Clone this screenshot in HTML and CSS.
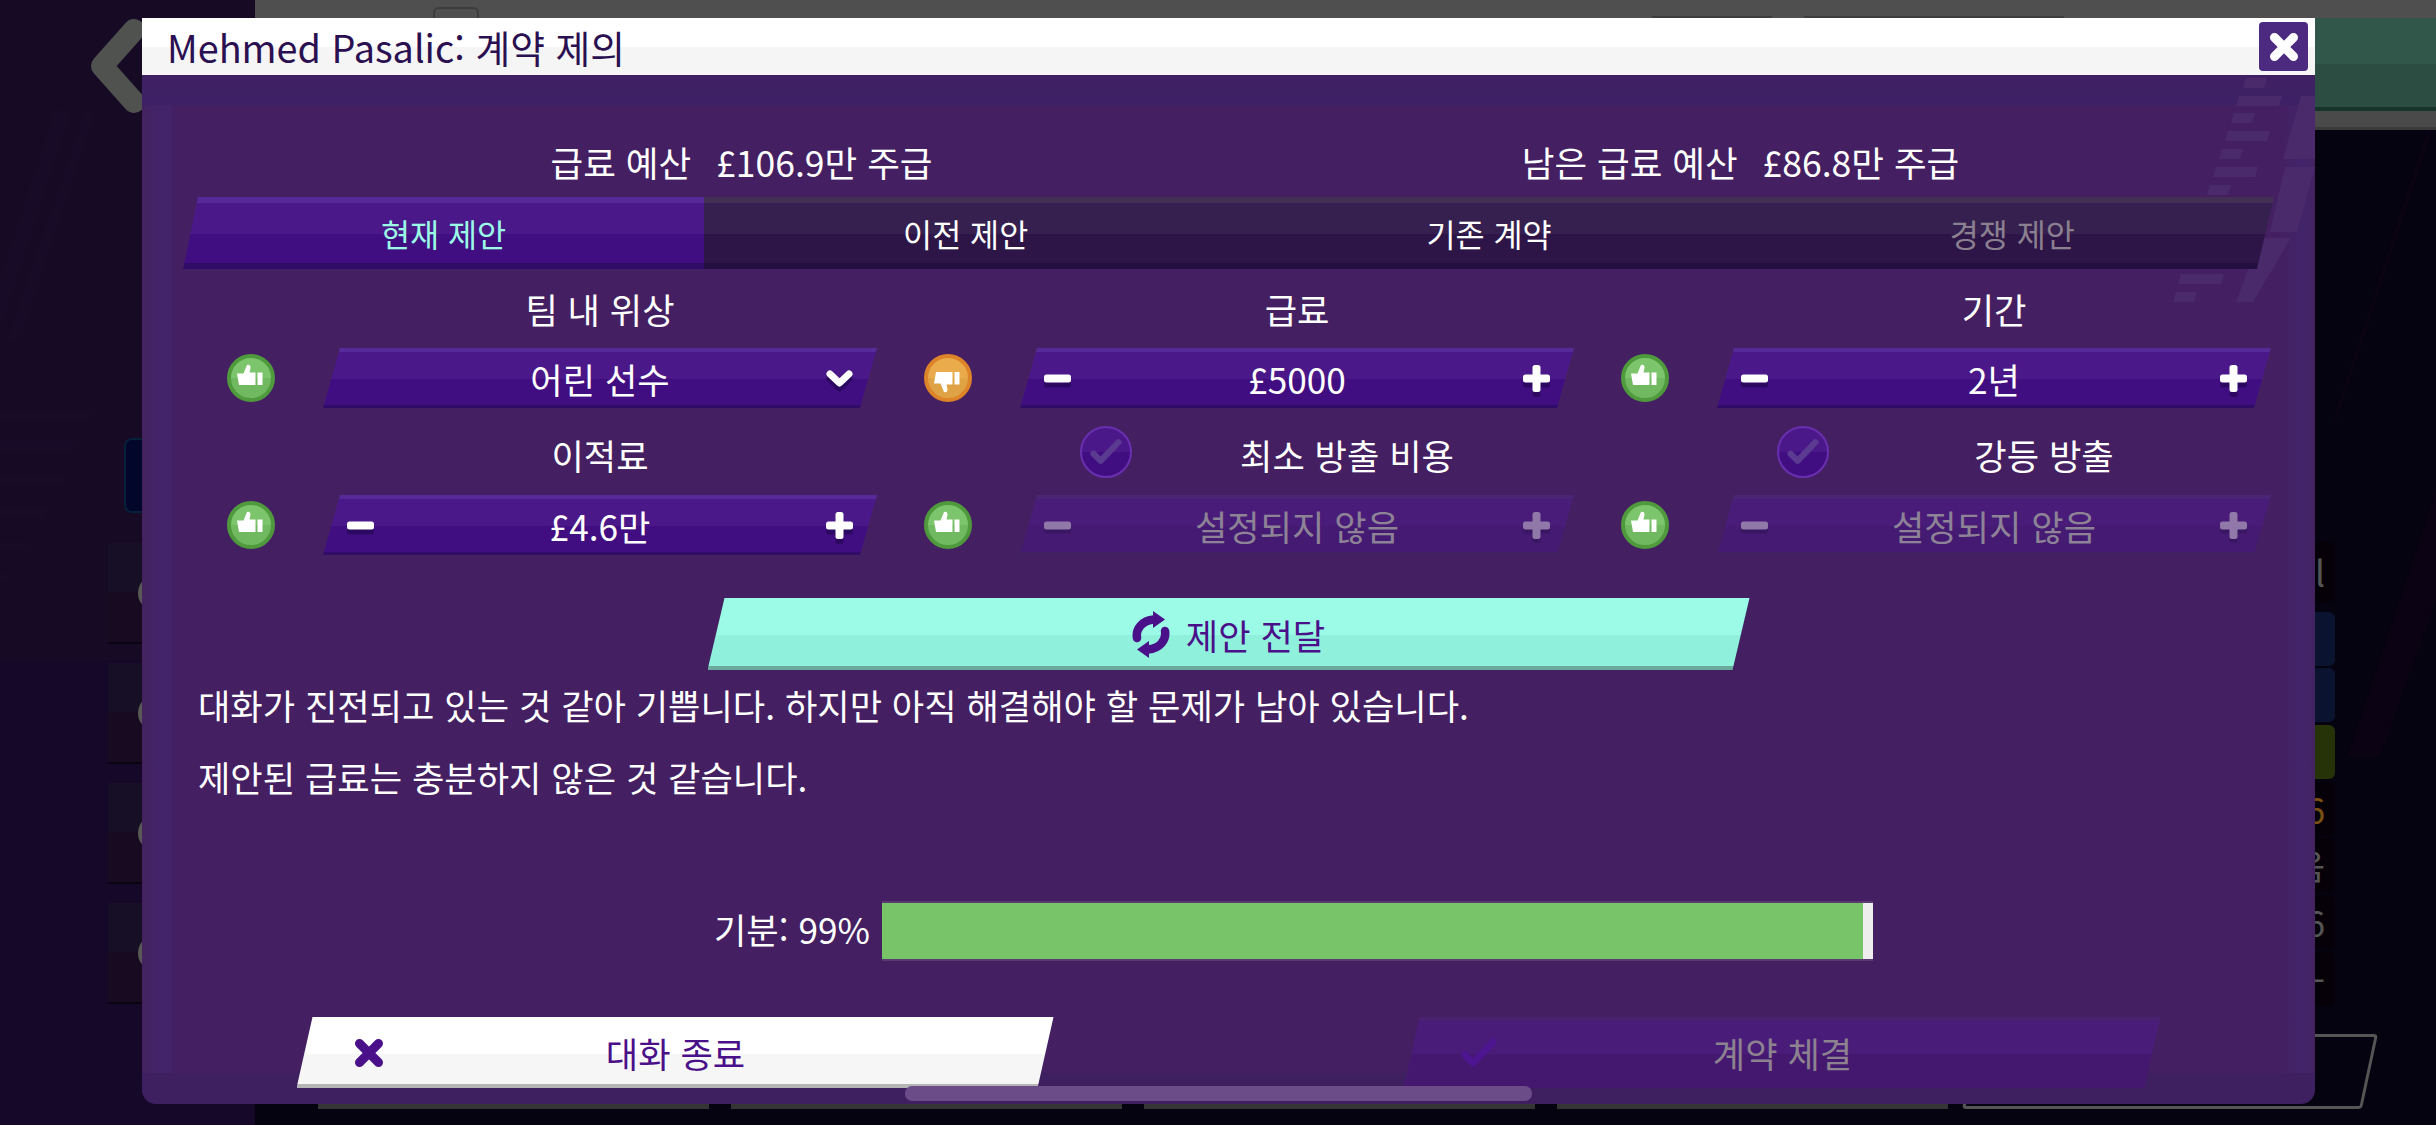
FILE: index.html
```html
<!DOCTYPE html>
<html lang="ko">
<head>
    <meta charset="UTF-8">
    <meta name="viewport" content="width=device-width, initial-scale=1.0">
    <title>Mehmed Pasalic: 계약 제의</title>
    <link rel="stylesheet" href="styles.css">
</head>
<body>
    <svg class="icon-defs" width="0" height="0">
        <defs>
            <linearGradient id="good-fill" x1="0" y1="0" x2="0" y2="1">
                <stop offset="0.5" stop-color="#7cc56c"/>
                <stop offset="0.5" stop-color="#71b961"/>
            </linearGradient>
            <linearGradient id="bad-fill" x1="0" y1="0" x2="0" y2="1">
                <stop offset="0.5" stop-color="#e9ab4b"/>
                <stop offset="0.5" stop-color="#dfa244"/>
            </linearGradient>
            <linearGradient id="toggle-fill" x1="0" y1="0" x2="0" y2="1">
                <stop offset="0.5" stop-color="#4b1889"/>
                <stop offset="0.5" stop-color="#410e82"/>
            </linearGradient>
            <symbol id="thumb-up" viewBox="0 0 48 48">
                <path d="M10 19.5 L16.5 19.5 L20 11 Q23.5 10 23.5 14 L22.5 18.5 L28.5 18.5 L28.5 31 L12 31 Z" fill="#fff"/>
                <rect x="30.5" y="18.5" width="5" height="12.5" fill="#fff"/>
            </symbol>
            <symbol id="minus" viewBox="0 0 27 27">
                <rect x="0" y="9.5" width="27" height="8" rx="2.5" fill="currentColor"/>
            </symbol>
            <symbol id="plus" viewBox="0 0 27 27">
                <rect x="0" y="9.5" width="27" height="8" rx="2.5" fill="currentColor"/>
                <rect x="9.5" y="0" width="8" height="27" rx="2.5" fill="currentColor"/>
            </symbol>
            <symbol id="cross" viewBox="0 0 30 30">
                <path d="M5.5 5.5 L24.5 24.5 M24.5 5.5 L5.5 24.5" stroke="currentColor" stroke-width="9" stroke-linecap="round" fill="none"/>
            </symbol>
            <symbol id="tick" viewBox="0 0 36 30">
                <path d="M4 17 L12 25 L32 4" stroke="currentColor" stroke-width="7" stroke-linecap="round" stroke-linejoin="round" fill="none"/>
            </symbol>
        </defs>
    </svg>

    <!-- 뒤에 있는 화면 -->
    <div class="backdrop">
        <aside class="sidebar">
            <svg class="back-arrow" width="60" height="96" viewBox="0 0 60 96">
                <path d="M46 12 L14 48 L46 84" stroke="#50524f" stroke-width="22" stroke-linecap="round" stroke-linejoin="round" fill="none"/>
            </svg>
            <div class="side-badge"></div>
            <div class="side-row"></div>
            <div class="side-row"></div>
            <div class="side-row"></div>
            <div class="side-row"></div>
        </aside>
        <main class="screen">
            <div class="screen-top">
                <span class="top-tab"></span>
                <span class="top-mark first"></span>
                <span class="top-mark second"></span>
            </div>
            <div class="screen-hero"></div>
            <div class="screen-strip"></div>
            <div class="rail">
                <div class="rail-cell tall">l</div>
                <div class="rail-cell blue"></div>
                <div class="rail-cell blue"></div>
                <div class="rail-cell olive"></div>
                <div class="rail-cell orange">6</div>
                <div class="rail-cell">음</div>
                <div class="rail-cell">6</div>
                <div class="rail-cell">-</div>
            </div>
            <div class="screen-foot">
                <span class="foot-btn"></span>
                <span class="foot-btn"></span>
                <span class="foot-btn"></span>
                <span class="foot-btn"></span>
                <span class="foot-btn outline"></span>
            </div>
        </main>
        <svg class="backdrop-deco" width="2436" height="1125" viewBox="0 0 2436 1125">
            <polygon points="0,410 96,410 92,420 0,420"/>
            <polygon points="0,441 80,441 76,452 0,452"/>
            <polygon points="0,475 65,475 61,485 0,485"/>
            <polygon points="0,508 48,508 44,518 0,518"/>
            <polygon points="0,542 32,542 28,550 0,550"/>
            <polygon points="0,574 16,574 12,580 0,580"/>
            <polygon points="55,110 72,110 0,330 0,280"/>
            <polygon points="85,110 96,110 20,340 8,340"/>
            <polygon class="red" points="2348,756 2380,756 2436,600 2436,492"/>
            <polygon class="red" points="2333,420 2337,420 2432,130 2428,130"/>
        </svg>
    </div>

    <section class="modal">
        <svg class="modal-deco" width="2173" height="1086" viewBox="142 18 2173 1086">
            <polygon points="2246,78 2267,78 2264,88 2243,88"/>
            <polygon points="2239,96 2282,96 2279,106 2236,106"/>
            <polygon points="2234,113 2255,113 2252,123 2231,123"/>
            <polygon points="2228,131 2270,131 2267,141 2225,141"/>
            <polygon points="2222,149 2243,149 2240,159 2219,159"/>
            <polygon points="2216,167 2258,167 2255,177 2213,177"/>
            <polygon points="2210,185 2231,185 2228,195 2207,195"/>
            <polygon points="2181,274 2224,274 2221,284 2178,284"/>
            <polygon points="2176,292 2197,292 2194,302 2173,302"/>
            <polygon points="2301,96 2315,96 2315,159 2283,159"/>
            <polygon points="2285,167 2315,167 2297,232 2270,232"/>
            <polygon points="2260,238 2291,238 2253,302 2236,302"/>
        </svg>

        <header class="modal-header">
            <h1>Mehmed Pasalic: 계약 제의</h1>
            <button class="close-btn"><svg width="30" height="30"><use href="#cross"/></svg></button>
        </header>

        <div class="budget">
            <div class="budget-item"><span>급료 예산</span><span>£106.9만 주급</span></div>
            <div class="budget-item"><span>남은 급료 예산</span><span>£86.8만 주급</span></div>
        </div>

        <nav class="tabs">
            <div class="tab active">현재 제안</div>
            <div class="tab">이전 제안</div>
            <div class="tab">기존 계약</div>
            <div class="tab muted">경쟁 제안</div>
        </nav>

        <div class="terms">
            <div class="term">
                <div class="term-label">팀 내 위상</div>
                <div class="term-row">
                    <svg class="thumb good" width="48" height="48" viewBox="0 0 48 48"><circle cx="24" cy="24" r="22"/><use href="#thumb-up"/></svg>
                    <div class="field">
                        <span></span>
                        <span class="field-value">어린 선수</span>
                        <svg class="step chevron" width="27" height="20" viewBox="0 0 27 20"><path d="M4 5 L13.5 14 L23 5" stroke="currentColor" stroke-width="7" stroke-linecap="round" stroke-linejoin="round" fill="none"/></svg>
                    </div>
                </div>
            </div>
            <div class="term">
                <div class="term-label">급료</div>
                <div class="term-row">
                    <svg class="thumb bad" width="48" height="48" viewBox="0 0 48 48"><circle cx="24" cy="24" r="22"/><use href="#thumb-up" transform="matrix(1 0 0 -1 0 49)"/></svg>
                    <div class="field">
                        <svg class="step" width="27" height="27"><use href="#minus"/></svg>
                        <span class="field-value">£5000</span>
                        <svg class="step" width="27" height="27"><use href="#plus"/></svg>
                    </div>
                </div>
            </div>
            <div class="term">
                <div class="term-label">기간</div>
                <div class="term-row">
                    <svg class="thumb good" width="48" height="48" viewBox="0 0 48 48"><circle cx="24" cy="24" r="22"/><use href="#thumb-up"/></svg>
                    <div class="field">
                        <svg class="step" width="27" height="27"><use href="#minus"/></svg>
                        <span class="field-value">2년</span>
                        <svg class="step" width="27" height="27"><use href="#plus"/></svg>
                    </div>
                </div>
            </div>
            <div class="term">
                <div class="term-label lower">이적료</div>
                <div class="term-row">
                    <svg class="thumb good" width="48" height="48" viewBox="0 0 48 48"><circle cx="24" cy="24" r="22"/><use href="#thumb-up"/></svg>
                    <div class="field">
                        <svg class="step" width="27" height="27"><use href="#minus"/></svg>
                        <span class="field-value">£4.6만</span>
                        <svg class="step" width="27" height="27"><use href="#plus"/></svg>
                    </div>
                </div>
            </div>
            <div class="term">
                <div class="term-label lower checkable">
                    <svg class="check-toggle" width="52" height="52" viewBox="0 0 52 52"><circle cx="26" cy="26" r="25"/><use href="#tick" x="10" y="11" width="32" height="30"/></svg>
                    <span>최소 방출 비용</span>
                </div>
                <div class="term-row">
                    <svg class="thumb good" width="48" height="48" viewBox="0 0 48 48"><circle cx="24" cy="24" r="22"/><use href="#thumb-up"/></svg>
                    <div class="field off">
                        <svg class="step" width="27" height="27"><use href="#minus"/></svg>
                        <span class="field-value">설정되지 않음</span>
                        <svg class="step" width="27" height="27"><use href="#plus"/></svg>
                    </div>
                </div>
            </div>
            <div class="term">
                <div class="term-label lower checkable">
                    <svg class="check-toggle" width="52" height="52" viewBox="0 0 52 52"><circle cx="26" cy="26" r="25"/><use href="#tick" x="10" y="11" width="32" height="30"/></svg>
                    <span>강등 방출</span>
                </div>
                <div class="term-row">
                    <svg class="thumb good" width="48" height="48" viewBox="0 0 48 48"><circle cx="24" cy="24" r="22"/><use href="#thumb-up"/></svg>
                    <div class="field off">
                        <svg class="step" width="27" height="27"><use href="#minus"/></svg>
                        <span class="field-value">설정되지 않음</span>
                        <svg class="step" width="27" height="27"><use href="#plus"/></svg>
                    </div>
                </div>
            </div>
        </div>

        <button class="send-btn">
            <svg width="38" height="47" viewBox="0 0 38 47">
                <g id="refresh-half">
                    <path d="M5 27 C3.5 18 10 9.5 22 8.5" stroke="#4a1089" stroke-width="8.5" stroke-linecap="round" fill="none"/>
                    <polygon points="21,0 33,8.5 21,17" fill="#4a1089"/>
                </g>
                <use href="#refresh-half" transform="rotate(180 19 23.5)"/>
            </svg>
            <span>제안 전달</span>
        </button>

        <div class="messages">
            <p>대화가 진전되고 있는 것 같아 기쁩니다. 하지만 아직 해결해야 할 문제가 남아 있습니다.</p>
            <p>제안된 급료는 충분하지 않은 것 같습니다.</p>
        </div>

        <div class="mood">
            <span class="mood-label">기분: 99%</span>
            <div class="mood-bar"><div class="mood-fill" style="width: 99%"></div></div>
        </div>

        <footer class="actions">
            <button class="action-btn end">
                <svg width="30" height="30"><use href="#cross"/></svg>
                <span>대화 종료</span>
            </button>
            <button class="action-btn sign">
                <svg width="36" height="30"><use href="#tick"/></svg>
                <span>계약 체결</span>
            </button>
        </footer>

        <div class="scroll-thumb"></div>
    </section>
</body>
</html>
```

FILE: styles.css
```css
:root {
    --panel: #442062;
    --field-top: #562a98;
    --field-hi: #4b1889;
    --field-lo: #410e82;
    --field-edge: #300b68;
    --mint: #9bfbe7;
    --ink: #4a1089;
}

* {
    margin: 0;
    padding: 0;
    box-sizing: border-box;
}

body {
    position: relative;
    width: 2436px;
    height: 1125px;
    overflow: hidden;
    background-color: #05030f;
    color: #fff;
    font-family: "Noto Sans CJK KR", "Noto Sans", sans-serif;
    font-size: 35.2px;
}

button {
    border: none;
    font: inherit;
}

.icon-defs {
    position: absolute;
}

/* 뒤 화면 */
.backdrop {
    display: flex;
    height: 100%;
}

.backdrop-deco {
    position: absolute;
    left: 0;
    top: 0;
    fill: rgba(40, 30, 70, 0.1);
}

.backdrop-deco .red {
    fill: rgba(60, 0, 60, 0.12);
}

.sidebar {
    display: flex;
    flex-direction: column;
    width: 255px;
    padding: 18px 0 0 108px;
    background: linear-gradient(#170a24 0, #170a24 660px, #160829 660px);
}

.back-arrow {
    margin-left: -20px;
}

.side-badge {
    width: 60px;
    height: 75px;
    margin: 324px 0 0 16px;
    border-radius: 8px;
    background-color: #01062a;
    border: 2px solid #07203a;
}

.side-row {
    flex: none;
    display: flex;
    align-items: center;
    height: 101px;
    margin-bottom: 19px;
    padding-left: 30px;
    background: linear-gradient(#160f26 50%, #180a20 50%);
    border-bottom: 2px solid #0a0412;
}

.side-row::after {
    content: "";
    width: 36px;
    height: 36px;
    border-radius: 50%;
    background-color: #5a5a55;
}

.side-badge + .side-row {
    margin-top: 30px;
}

.screen {
    flex: 1;
    display: flex;
    flex-direction: column;
}

.screen-top {
    display: flex;
    height: 18px;
    background-color: #4f4f4f;
    padding-left: 178px;
}

.top-tab {
    width: 46px;
    height: 12px;
    margin-top: 7px;
    border: 2px solid #3d3d3d;
    border-bottom: none;
    border-radius: 6px 6px 0 0;
}

.top-mark {
    height: 2px;
    margin-top: 16px;
    background-color: #3d3d3d;
}

.top-mark.first {
    width: 120px;
    margin-left: 1173px;
}

.top-mark.second {
    width: 260px;
    margin-left: 32px;
}

.screen-hero {
    height: 93px;
    background: linear-gradient(#30574a 46px, #2c4d41 46px, #2c4d41 89px, #17342a 89px);
}

.screen-strip {
    height: 19px;
    background: linear-gradient(#4a4a4a 16px, #3a3a3a 16px);
}

.rail {
    display: flex;
    flex-direction: column;
    gap: 2.7px;
    align-self: flex-end;
    width: 60px;
    margin: 412px 101px 0 0;
}

.rail-cell {
    height: 54px;
    padding-right: 10px;
    border-radius: 6px;
    background-color: #060109;
    color: #555;
    line-height: 54px;
    text-align: right;
}

.rail-cell.tall {
    height: 60px;
    margin-bottom: 7px;
    line-height: 60px;
}

.rail-cell.blue {
    background-color: #0a1330;
}

.rail-cell.olive {
    background-color: #263208;
}

.rail-cell.orange {
    color: #7a5010;
}

.screen-foot {
    display: flex;
    gap: 22px;
    align-items: flex-end;
    margin: 28px 0 0 63px;
}

.foot-btn {
    width: 391px;
    height: 75px;
    background-color: #353535;
}

.foot-btn.outline {
    width: 400px;
    background: transparent;
    border: 3px solid #555;
    border-radius: 4px;
    transform: skewX(-12deg);
}

/* 제의 창 */
.modal {
    position: absolute;
    left: 142px;
    top: 18px;
    width: 2173px;
    height: 1086px;
    overflow: hidden;
    border-radius: 0 0 14px 14px;
    background:
        linear-gradient(#402063, #3d2166 30px, transparent 30px) 0 57px / 100% 30px no-repeat,
        linear-gradient(#3e1f60, #3e1f60) 0 100% / 100% 31px no-repeat,
        linear-gradient(90deg, #44225f, #42246b 20px, #43236a 30px, transparent 30px) 0 0 / 30px 100% no-repeat,
        linear-gradient(90deg, transparent, #42246b 20px, #43235f 32px) 100% 0 / 32px 100% no-repeat,
        var(--panel);
}

.modal-deco {
    position: absolute;
    left: 0;
    top: 0;
    fill: #4a2a6a;
}

.modal-header {
    position: relative;
    display: flex;
    align-items: center;
    justify-content: space-between;
    height: 57px;
    padding: 0 7px 0 25px;
    background: linear-gradient(#fff 29px, #f5f5f5 29px);
}

.modal-header h1 {
    font-size: 37.8px;
    font-weight: 400;
    line-height: 57px;
    color: #2a1050;
}

.close-btn {
    display: flex;
    align-items: center;
    justify-content: center;
    width: 49px;
    height: 49px;
    border-radius: 4px;
    background-color: #4b2a80;
    color: #fff;
}

.budget {
    position: relative;
    display: flex;
    height: 65px;
    margin-top: 54px;
    margin-bottom: 3px;
    padding-left: 100px;
    font-size: 35.5px;
    line-height: 65px;
}

.budget-item {
    display: flex;
    justify-content: center;
    gap: 25px;
    width: 999px;
}

.tabs {
    position: relative;
    display: flex;
    width: 2091px;
    height: 72px;
    margin-left: 41px;
    clip-path: polygon(15px 0, 100% 0, calc(100% - 17px) 100%, 0 100%);
}

.tab {
    flex: 1;
    font-size: 31.6px;
    line-height: 72px;
    text-align: center;
    background: linear-gradient(#443054 6px, #35204f 6px, #35204f 37px, #2e1548 37px, #2e1548 66px, #241040 66px);
}

.tab.active {
    flex: none;
    width: 521px;
    color: var(--mint);
    background: linear-gradient(#56289a 6px, var(--field-hi) 6px, var(--field-hi) 37px, var(--field-lo) 37px, var(--field-lo) 66px, var(--field-edge) 66px);
}

.tab.muted {
    color: #8b8090;
}

.terms {
    position: relative;
    display: grid;
    grid-template-columns: repeat(3, 697px);
    row-gap: 25px;
    margin: 17px 0 0 38px;
}

.term-label {
    height: 48px;
    margin: 0 0 14px 143px;
    line-height: 45px;
    text-align: center;
}

.term-label.lower {
    line-height: 43px;
}

.term-label.checkable {
    display: flex;
    align-items: flex-start;
    padding-left: 60px;
}

.term-label.checkable span {
    flex: 1;
    padding-right: 12px;
}

.check-toggle {
    flex: none;
    margin-top: -7px;
    fill: url(#toggle-fill);
    stroke: #6a2fb0;
    stroke-width: 2;
    color: #5b3a92;
}

.check-toggle use {
    stroke: none;
}

.term-row {
    display: flex;
    align-items: center;
}

.thumb {
    flex: none;
    margin: 0 48px 0 47px;
    stroke-width: 4;
}

.thumb use {
    stroke: none;
}

.thumb.good {
    fill: url(#good-fill);
    stroke: #4f9a3c;
}

.thumb.bad {
    fill: url(#bad-fill);
    stroke: #de8428;
}

.field {
    display: grid;
    grid-template-columns: 27px 1fr 27px;
    align-items: center;
    width: 554px;
    height: 60px;
    padding: 0 24px;
    text-align: center;
    background: linear-gradient(var(--field-top) 4px, var(--field-hi) 4px, var(--field-hi) 31px, var(--field-lo) 31px, var(--field-lo) 57px, var(--field-edge) 57px);
    clip-path: polygon(17px 0, 100% 0, calc(100% - 17px) 100%, 0 100%);
}

.field-value {
    line-height: 60px;
    padding-top: 1px;
}

.step {
    color: #fff;
    filter: drop-shadow(0 5px 0 rgba(40, 8, 90, 0.8));
}

.field.off {
    color: #8d8296;
    background: linear-gradient(#4a2575 4px, #481c78 4px, #481c78 31px, #451a72 31px, #451a72 57px, #412063 57px);
}

.field.off .step {
    color: #9079a8;
    filter: drop-shadow(0 4px 0 rgba(50, 20, 90, 0.6));
}

.send-btn {
    position: relative;
    display: flex;
    align-items: center;
    justify-content: center;
    gap: 16px;
    width: 1042px;
    height: 72px;
    margin: 43px auto 0;
    color: var(--ink);
    background: linear-gradient(var(--mint) 37px, #8ff0dc 37px, #8ff0dc 68px, #6aa99b 68px);
    clip-path: polygon(17px 0, 100% 0, calc(100% - 17px) 100%, 0 100%);
}

.messages {
    position: relative;
    margin: -1px 0 0 56px;
    line-height: 72px;
}

.mood {
    position: relative;
    display: flex;
    align-items: center;
    gap: 13px;
    margin-top: 90px;
    padding-left: 572px;
}

.mood-label {
    width: 155px;
    margin-top: -5px;
    white-space: nowrap;
}

.mood-bar {
    width: 991px;
    height: 56px;
    background-color: #eee;
    box-shadow: 0 2px 0 #5a3a72, 0 -2px 0 #5a3a72;
}

.mood-fill {
    height: 100%;
    background-color: #78c569;
}

.actions {
    position: relative;
    display: flex;
    justify-content: center;
    gap: 350px;
    margin-top: 58px;
}

.action-btn {
    display: grid;
    grid-template-columns: 30px 1fr 30px;
    align-items: center;
    width: 757px;
    height: 71px;
    padding: 0 56px 0 57px;
    line-height: 68px;
    clip-path: polygon(16px 0, 100% 0, calc(100% - 16px) 100%, 0 100%);
}

.action-btn.end {
    color: var(--ink);
    background: linear-gradient(#fff 37px, #f6f6f6 37px, #f6f6f6 67px, #b5b5b5 67px);
}

.action-btn.sign {
    color: #8d8290;
    background: linear-gradient(#4a2170 4px, #481c78 4px, #481c78 37px, #45186f 37px);
}

.action-btn.sign svg {
    color: #4e1590;
}

.scroll-thumb {
    position: absolute;
    left: 763px;
    top: 1068px;
    width: 627px;
    height: 15px;
    border-radius: 7px;
    background-color: #6b4b88;
}
```
